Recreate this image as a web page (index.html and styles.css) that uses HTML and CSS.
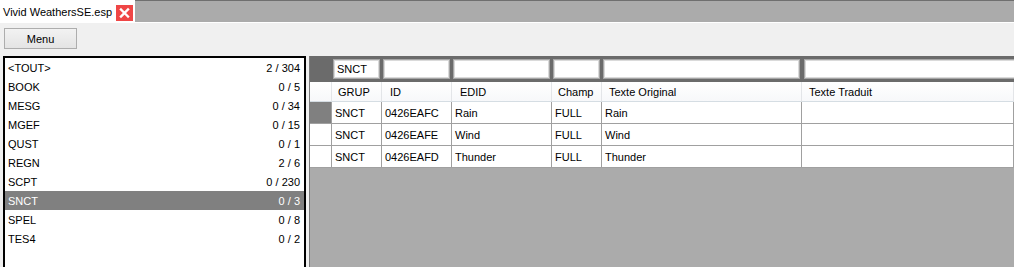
FILE: index.html
```html
<!DOCTYPE html>
<html>
<head>
<meta charset="utf-8">
<link rel="stylesheet" href="styles.css">
</head>
<body>
<div class="tabstrip">
  <div class="tab">
    <span class="tab-title">Vivid WeathersSE.esp</span>
    <span class="close"><svg width="17" height="16" viewBox="0 0 17 16"><path d="M5 4.5 L12 11.5 M12 4.5 L5 11.5" stroke="#fff" stroke-width="2.4" stroke-linecap="square"/></svg></span>
  </div>
</div>
<div class="toolbar"><button class="btn">Menu</button></div>
<div class="main">
  <div class="list">
    <div class="item"><span>&lt;TOUT&gt;</span><span>2 / 304</span></div>
    <div class="item"><span>BOOK</span><span>0 / 5</span></div>
    <div class="item"><span>MESG</span><span>0 / 34</span></div>
    <div class="item"><span>MGEF</span><span>0 / 15</span></div>
    <div class="item"><span>QUST</span><span>0 / 1</span></div>
    <div class="item"><span>REGN</span><span>2 / 6</span></div>
    <div class="item"><span>SCPT</span><span>0 / 230</span></div>
    <div class="item selected"><span>SNCT</span><span>0 / 3</span></div>
    <div class="item"><span>SPEL</span><span>0 / 8</span></div>
    <div class="item"><span>TES4</span><span>0 / 2</span></div>
  </div>
  <div class="gridpanel">
    <div class="filters">
      <div class="fbox f1">SNCT</div>
      <div class="fbox f2"></div>
      <div class="fbox f3"></div>
      <div class="fbox f4"></div>
      <div class="fbox f5"></div>
      <div class="fbox f6"></div>
    </div>
    <div class="grid">
      <div class="hd rh"></div>
      <div class="hd p6">GRUP</div>
      <div class="hd p8">ID</div>
      <div class="hd p8">EDID</div>
      <div class="hd p6">Champ</div>
      <div class="hd p7">Texte Original</div>
      <div class="hd p7">Texte Traduit</div>

      <div class="cell rh cur"></div>
      <div class="cell">SNCT</div>
      <div class="cell">0426EAFC</div>
      <div class="cell">Rain</div>
      <div class="cell">FULL</div>
      <div class="cell">Rain</div>
      <div class="cell"></div>

      <div class="cell rh"></div>
      <div class="cell">SNCT</div>
      <div class="cell">0426EAFE</div>
      <div class="cell">Wind</div>
      <div class="cell">FULL</div>
      <div class="cell">Wind</div>
      <div class="cell"></div>

      <div class="cell rh"></div>
      <div class="cell">SNCT</div>
      <div class="cell">0426EAFD</div>
      <div class="cell">Thunder</div>
      <div class="cell">FULL</div>
      <div class="cell">Thunder</div>
      <div class="cell"></div>
    </div>
  </div>
</div>
</body>
</html>
```

FILE: styles.css
```css
* { box-sizing: border-box; }
html, body { margin: 0; padding: 0; }
body {
  width: 1014px;
  height: 267px;
  overflow: hidden;
  background: #f0f0f0;
  font-family: "Liberation Sans", Arial, sans-serif;
  font-size: 11px;
  color: #000;
}
.tabstrip {
  height: 23px;
  background: #ababab;
  border-top: 1px solid #6f6f6f;
  border-bottom: 1px solid #ffffff;
  display: flex;
  align-items: flex-start;
}
.tab {
  width: 135px;
  height: 22px;
  margin-top: -1px;
  background: #fff;
  display: flex;
  align-items: center;
  padding-left: 3px;
}
.tab-title { width: 113px; white-space: nowrap; padding-top: 1px; }
.close {
  width: 17px;
  height: 16px;
  background: #ef4646;
  display: flex;
  margin-top: 5px;
  margin-bottom: 0;
  align-self: flex-start;
}
.toolbar {
  height: 33px;
  padding: 5px 0 0 4px;
}
.btn {
  width: 73px;
  height: 21px;
  margin: 0;
  padding: 0;
  border: 1px solid #adadad;
  background: linear-gradient(#f2f2f2, #e4e4e4);
  font-family: inherit;
  font-size: 11px;
  color: #000;
}
.main {
  height: 211px;
  display: flex;
  overflow: hidden;
}
.list {
  width: 303px;
  height: 220px;
  margin-left: 3px;
  border: 2px solid #000;
  border-bottom: none;
  background: #fff;
  flex: none;
}
.item {
  height: 19px;
  display: flex;
  justify-content: space-between;
  align-items: center;
  padding: 0 4px 0 3px;
}
.item.selected { background: #808080; color: #fff; }
.gridpanel {
  flex: 1;
  margin-left: 3px;
  border-left: 1px solid #7a7a7a;
  background: #ababab;
  display: flex;
  flex-direction: column;
  min-width: 0;
}
.filters {
  height: 26px;
  background: #6b6b6b;
  display: flex;
  padding: 3px 0 3px 23px;
}
.fbox {
  height: 20px;
  background: #fff;
  border: 1px solid #a6a6a6;
  box-shadow: inset 0 0 0 1px #dadada;
  padding: 0 0 0 3px;
  display: flex;
  align-items: center;
  flex: none;
}
.f1 { width: 47px; }
.f2 { width: 67px; margin-left: 3px; }
.f3 { width: 97px; margin-left: 3px; }
.f4 { width: 47px; margin-left: 3px; }
.f5 { width: 197px; margin-left: 3px; }
.f6 { flex: 1; margin-left: 4px; margin-right: -4px; }
.grid {
  display: grid;
  grid-template-columns: 22px 50px 70px 100px 50px 200px 1fr;
  grid-auto-rows: 22px;
  grid-template-rows: 20px;
}
.hd {
  background: linear-gradient(#ffffff, #f7f8fa);
  border-right: 1px solid #e3e5e8;
  border-bottom: 1px solid #d5dde3;
  display: flex;
  align-items: center;
  white-space: nowrap;
}
.p6 { padding-left: 6px; }
.p7 { padding-left: 7px; }
.p8 { padding-left: 8px; }
.cell {
  background: #fff;
  border-right: 1px solid #a0a0a0;
  border-bottom: 1px solid #a0a0a0;
  display: flex;
  align-items: center;
  padding-left: 3px;
  padding-top: 1px;
  white-space: nowrap;
}
.cell.cur { background: #808080; }
```
